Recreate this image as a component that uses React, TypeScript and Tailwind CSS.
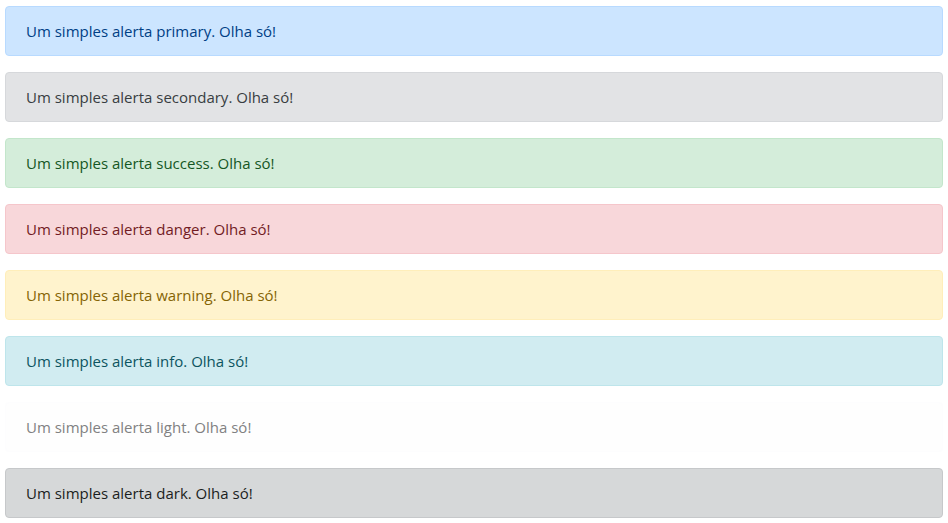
const alerts = [
  { name: 'primary', cls: 'bg-[#cce5ff] border-[#b8daff] text-[#004085]' },
  { name: 'secondary', cls: 'bg-[#e2e3e5] border-[#d6d8db] text-[#383d41]' },
  { name: 'success', cls: 'bg-[#d4edda] border-[#c3e6cb] text-[#155724]' },
  { name: 'danger', cls: 'bg-[#f8d7da] border-[#f5c6cb] text-[#721c24]' },
  { name: 'warning', cls: 'bg-[#fff3cd] border-[#ffeeba] text-[#856404]' },
  { name: 'info', cls: 'bg-[#d1ecf1] border-[#bee5eb] text-[#0c5460]' },
  { name: 'light', cls: 'bg-[#fefefe] border-[#fdfdfe] text-[#818182]' },
  { name: 'dark', cls: 'bg-[#d6d8d9] border-[#c6c8ca] text-[#1b1e21]' },
];

const App = () => {
  return (
    <div className="bg-white min-h-screen pt-[6px] px-[5px] font-['Open_Sans',sans-serif]">
      <div className="flex flex-col gap-4">
        {alerts.map((a) => (
          <div
            key={a.name}
            className={`border rounded px-5 py-3 text-[15px] leading-6 ${a.cls}`}
          >
            Um simples alerta {a.name}. Olha só!
          </div>
        ))}
      </div>
    </div>
  );
};

export default App;
